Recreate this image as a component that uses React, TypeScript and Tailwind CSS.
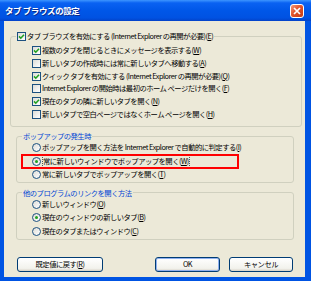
const font = "font-['Noto_Sans_CJK_JP','Liberation_Sans',sans-serif]";

function Mn({ k }: { k: string }) {
  return (
    <>
      (<span className="underline underline-offset-1">{k}</span>)
    </>
  );
}

function Check({ checked }: { checked?: boolean }) {
  return (
    <span className="flex h-[9px] w-[9px] shrink-0 items-center justify-center border border-[#1c5180] bg-[linear-gradient(135deg,#dcdcd7,#ffffff)]">
      {checked && (
        <svg viewBox="0 0 7 7" className="h-[7px] w-[7px]">
          <path d="M1 3.4 L2.8 5.2 L6 1.8" stroke="#21a121" strokeWidth="1.6" fill="none" />
        </svg>
      )}
    </span>
  );
}

function Radio({ checked }: { checked?: boolean }) {
  return (
    <span className="flex h-[9px] w-[9px] shrink-0 items-center justify-center rounded-full border border-[#1c5180] bg-[linear-gradient(135deg,#dcdcd7,#ffffff)]">
      {checked && <span className="h-[3px] w-[3px] rounded-full bg-[#21a121]" />}
    </span>
  );
}

const subOptions: { text: string; k: string; checked: boolean }[] = [
  { text: "複数のタブを閉じるときにメッセージを表示する", k: "W", checked: true },
  { text: "新しいタブの作成時には常に新しいタブへ移動する", k: "A", checked: false },
  { text: "クイック タブを有効にする (Internet Explorer の再開が必要)", k: "Q", checked: true },
  { text: "Internet Explorer の開始時は最初のホーム ページだけを開く", k: "F", checked: false },
  { text: "現在のタブの隣に新しいタブを開く", k: "N", checked: true },
  { text: "新しいタブで空白ページではなくホーム ページを開く", k: "H", checked: false },
];

const popupOptions = [
  { text: "ポップアップを開く方法を Internet Explorer で自動的に判定する", k: "I", checked: false },
  { text: "常に新しいウィンドウでポップアップを開く", k: "W", checked: true },
  { text: "常に新しいタブでポップアップを開く", k: "T", checked: false },
];

const linkOptions = [
  { text: "新しいウィンドウ", k: "O", checked: false },
  { text: "現在のウィンドウの新しいタブ", k: "B", checked: true },
  { text: "現在のタブまたはウィンドウ", k: "C", checked: false },
];

export default function App() {
  return (
    <div className={`flex h-[281px] w-[311px] flex-col text-[7.3px] tracking-[-0.5px] text-black ${font}`}>
      {/* title bar */}
      <div className="flex h-[21px] shrink-0 items-center justify-between bg-[linear-gradient(180deg,#3d95ff_0%,#0a62f2_14%,#0057e8_50%,#0052e2_85%,#0342c8_100%)] pl-[5px] pr-[7px]">
        <span className="text-[8.5px] font-bold tracking-[-0.4px] text-white [text-shadow:1px_1px_0_#0a2a8a]">
          タブ ブラウズの設定
        </span>
        <div className="flex h-[14px] w-[14px] items-center justify-center rounded-[3px] border border-white bg-[linear-gradient(135deg,#f49a7c,#e2532a_45%,#c43c16)]">
          <svg viewBox="0 0 8 8" className="h-[8px] w-[8px]">
            <path d="M1 1 L7 7 M7 1 L1 7" stroke="#fff" strokeWidth="1.7" />
          </svg>
        </div>
      </div>

      {/* body */}
      <div className="flex flex-1 flex-col border-b-4 border-l-4 border-r-[6px] border-[#0054e3] bg-[#ece9d8]">
        <fieldset className="ml-[6px] mr-[3px] mt-[9px] rounded-[3px] border border-[#d0d0bf] px-[5px] pb-[5px]">
          <legend className="px-[1px]">
            <div className="flex h-[12px] items-center gap-[1px]">
              <Check checked />
              <span>
                タブ ブラウズを有効にする (Internet Explorer の再開が必要)<Mn k="E" />
              </span>
            </div>
          </legend>
          <div className="pt-[2.5px]">
            {subOptions.map((o) => (
              <div key={o.text} className="flex h-[12.7px] items-center gap-[1px] pl-[16px]">
                <Check checked={o.checked} />
                <span>
                  {o.text}
                  <Mn k={o.k} />
                </span>
              </div>
            ))}
          </div>
        </fieldset>

        <fieldset className="ml-[12px] mr-[11px] mt-[4.5px] rounded-[3px] border border-[#d0d0bf] px-[5px] pb-[0.5px]">
          <legend className="px-[1px] leading-[10px] text-[#0046d5]">ポップアップの発生時</legend>
          {popupOptions.map((o) => (
            <div key={o.text} className="flex h-[13.5px] items-center">
              <div
                className={`flex h-full items-center gap-[1px] pl-[10px] ${
                  o.checked ? "w-[216px] outline-2 outline-offset-[-1px] outline-[#ff0000]" : ""
                }`}
              >
                <Radio checked={o.checked} />
                <span className={o.checked ? "border border-dotted border-[#555]" : ""}>
                  {o.text}
                  <Mn k={o.k} />
                </span>
              </div>
            </div>
          ))}
        </fieldset>

        <fieldset className="ml-[12px] mr-[11px] mt-[4.5px] rounded-[3px] border border-[#d0d0bf] px-[5px] pb-[0.5px]">
          <legend className="px-[1px] leading-[10px] text-[#0046d5]">他のプログラムのリンクを開く方法</legend>
          {linkOptions.map((o) => (
            <div key={o.text} className="flex h-[13.5px] items-center gap-[1px] pl-[10px]">
              <Radio checked={o.checked} />
              <span>
                {o.text}
                <Mn k={o.k} />
              </span>
            </div>
          ))}
        </fieldset>

        <div className="mt-[17px] flex pl-[13px] pr-[12px]">
          <button className="flex h-[15px] w-[86px] items-center justify-center rounded-[3px] border border-[#003c74] bg-[linear-gradient(180deg,#ffffff,#f2f2ec_80%,#d8d2c6)]">
            既定値に戻す<Mn k="R" />
          </button>
          <div className="ml-auto flex gap-[9px]">
            <button className="flex h-[15px] w-[65px] items-center justify-center rounded-[3px] border border-[#003c74] bg-[linear-gradient(180deg,#ffffff,#f2f2ec_80%,#d8d2c6)] shadow-[inset_0_0_0_1px_#8fb0ef]">
              OK
            </button>
            <button className="flex h-[15px] w-[64px] items-center justify-center rounded-[3px] border border-[#003c74] bg-[linear-gradient(180deg,#ffffff,#f2f2ec_80%,#d8d2c6)]">
              キャンセル
            </button>
          </div>
        </div>
      </div>
    </div>
  );
}
